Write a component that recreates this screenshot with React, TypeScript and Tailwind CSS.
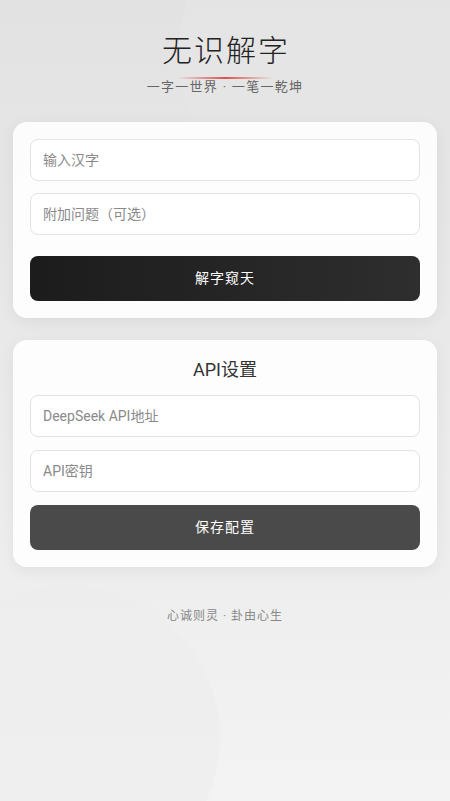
import { useState } from "react";

export default function App() {
  const [char, setChar] = useState("");
  const [question, setQuestion] = useState("");
  const [apiUrl, setApiUrl] = useState("");
  const [apiKey, setApiKey] = useState("");

  const inputCls =
    "w-full h-[42px] rounded-lg border border-[#e3e3e3] bg-white px-3 text-[14px] text-[#333] placeholder:text-[#8a8a8a] outline-none";

  return (
    <div
      className="relative min-h-[801px] w-full overflow-hidden bg-gradient-to-b from-[#e2e2e2] to-[#f3f3f3]"
      style={{ fontFamily: "Roboto, 'Noto Sans CJK SC', sans-serif" }}
    >
      {/* decorative circles */}
      <div className="pointer-events-none absolute left-[178px] top-[-110px] h-[330px] w-[330px] rounded-full bg-[#e6e6e6]/70" />
      <div className="pointer-events-none absolute left-[-85px] top-[585px] h-[305px] w-[305px] rounded-full bg-[#ececec]/60" />

      <div className="relative flex flex-col items-center px-[13px]">
        <h1 className="mt-[32px] pl-[2px] text-[30px] font-light leading-[38px] tracking-[2px] text-[#222]">
          无识解字
        </h1>
        <div className="mt-[7px] h-[2px] w-[96px] bg-gradient-to-r from-transparent via-[#d9534f] to-transparent" />
        <p className="mt-[0px] text-[13px] leading-[16px] tracking-[1.3px] text-[#666]">
          一字一世界 · 一笔一乾坤
        </p>

        {/* main card */}
        <div className="mt-[27px] w-full rounded-[14px] bg-white/90 p-[17px] shadow-[0_4px_16px_rgba(0,0,0,0.06)]">
          <div className="flex flex-col gap-[12px]">
            <input className={inputCls} placeholder="输入汉字" value={char} onChange={(e) => setChar(e.target.value)} />
            <input
              className={inputCls}
              placeholder="附加问题（可选）"
              value={question}
              onChange={(e) => setQuestion(e.target.value)}
            />
          </div>
          <button className="mt-[21px] h-[45px] w-full rounded-lg bg-gradient-to-r from-[#1c1c1c] to-[#2e2e2e] text-[14px] tracking-[1px] text-white">
            解字窥天
          </button>
        </div>

        {/* api card */}
        <div className="mt-[22px] w-full rounded-[14px] bg-white/90 px-[17px] pb-[17px] pt-[18px] shadow-[0_4px_16px_rgba(0,0,0,0.06)]">
          <h2 className="text-center text-[18px] leading-[24px] text-[#333]">API设置</h2>
          <div className="mt-[13px] flex flex-col gap-[13px]">
            <input
              className={inputCls}
              placeholder="DeepSeek API地址"
              value={apiUrl}
              onChange={(e) => setApiUrl(e.target.value)}
            />
            <input
              className={inputCls}
              placeholder="API密钥"
              type="password"
              value={apiKey}
              onChange={(e) => setApiKey(e.target.value)}
            />
            <button className="h-[45px] w-full rounded-lg bg-[#4a4a4a] text-[14px] tracking-[1px] text-white">
              保存配置
            </button>
          </div>
        </div>

        <p className="mt-[40px] text-[12px] tracking-[1px] text-[#888]">心诚则灵 · 卦由心生</p>
      </div>
    </div>
  );
}
